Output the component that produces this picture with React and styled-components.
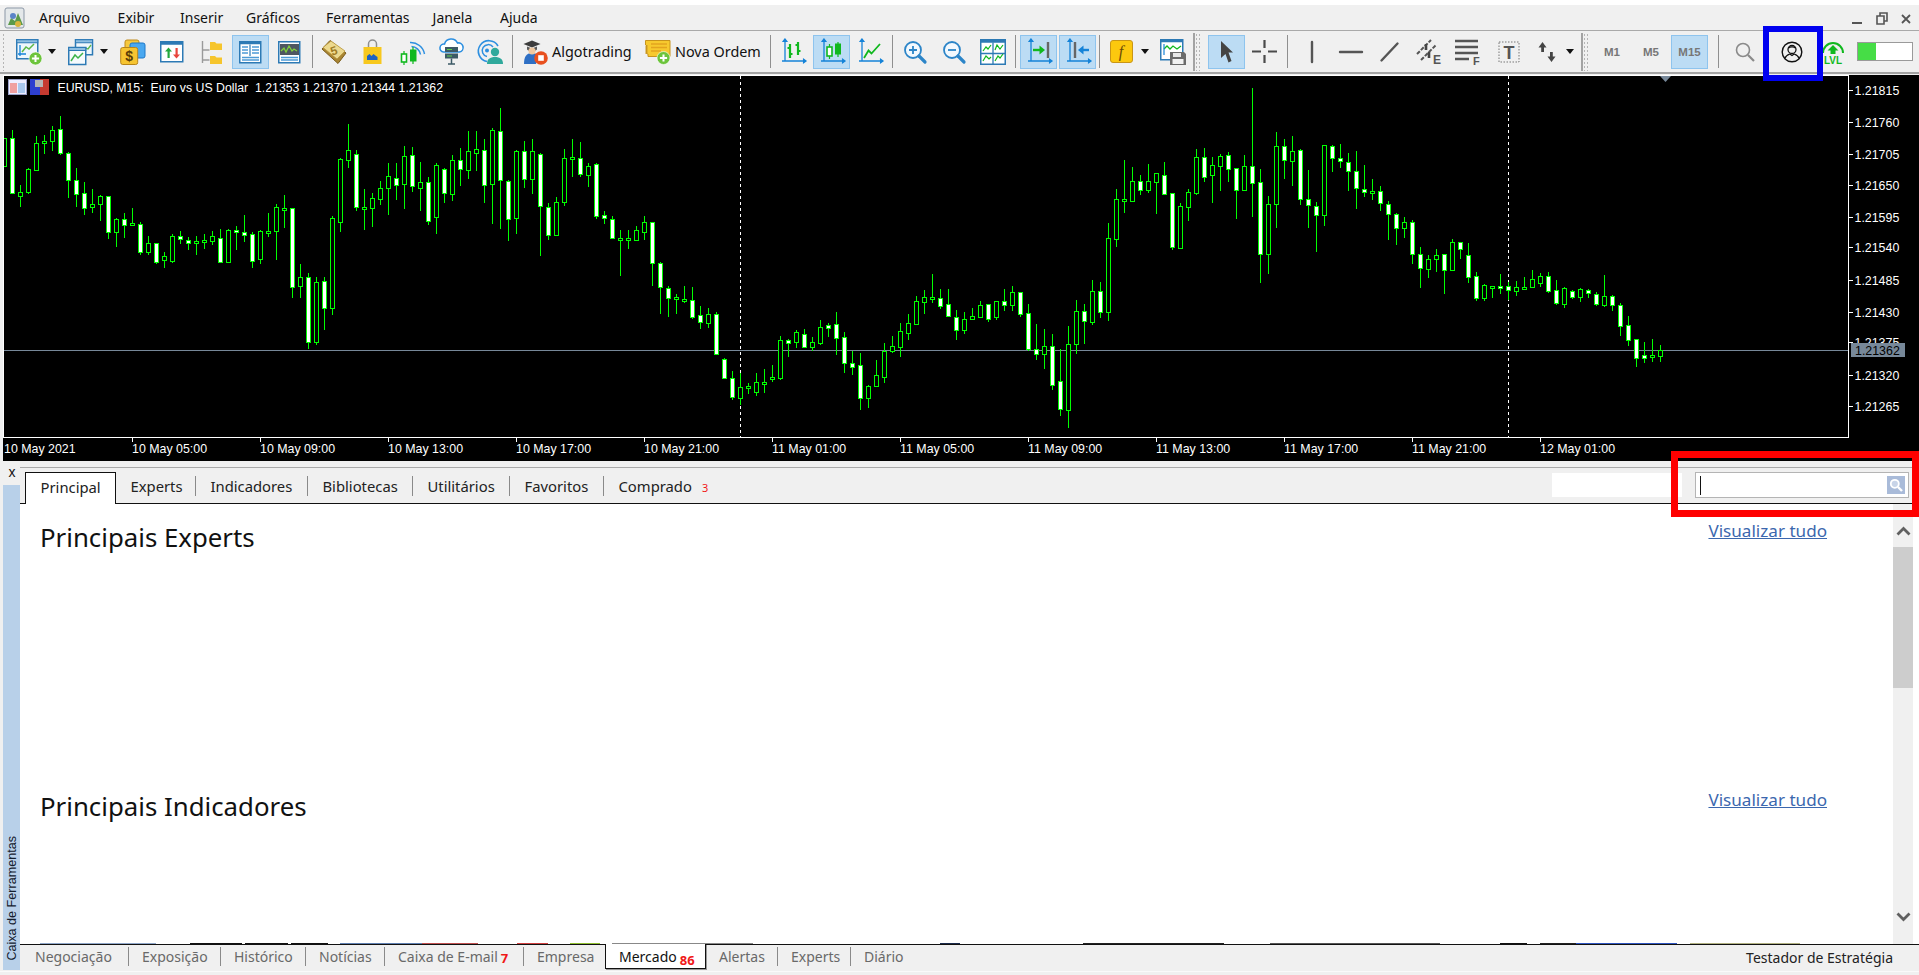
import React from 'react';
import styled, { createGlobalStyle } from 'styled-components';

const UI_FONT = `'Noto Sans', 'Open Sans', Arial, sans-serif`;

const GlobalStyle = createGlobalStyle`
  html, body { margin: 0; padding: 0; background: #f0f0f0; overflow: hidden; }
  #root { width: 1919px; height: 975px; }
  * { box-sizing: border-box; }
`;

const Window = styled.div`
  position: relative;
  width: 1919px;
  height: 975px;
  display: flex;
  flex-direction: column;
  background: #f0f0f0;
  font-family: ${UI_FONT};
  overflow: hidden;
`;

const MenuBar = styled.div`
  height: 31px;
  flex: none;
  display: flex;
  align-items: center;
  border-top: 5px solid #fff;
  border-bottom: 1px solid #a9a9a9;
`;
const AppIcon = styled.svg`
  width: 22px;
  height: 22px;
  margin: 0 13px 0 4px;
  flex: none;
`;
const MenuItem = styled.span`
  width: ${(p) => p.$w}px;
  flex: none;
  font-size: 14px;
  color: #111;
  white-space: nowrap;
`;
const WindowControls = styled.div`
  margin-left: auto;
  display: flex;
  align-items: center;
  padding-right: 7px;
`;

const Toolbar = styled.div`
  height: 43px;
  flex: none;
  display: flex;
  align-items: center;
  border-bottom: 2px solid #a3a3a3;
`;
const Slot = styled.div`
  flex: none;
  width: ${(p) => p.$w}px;
  height: 34px;
  margin-left: ${(p) => p.$ml}px;
  display: flex;
  align-items: center;
  justify-content: center;
  background: ${(p) => (p.$on ? '#bcdcf4' : 'transparent')};
  border: 1px solid ${(p) => (p.$on ? '#8ec4ee' : 'transparent')};
  svg { display: block; flex: none; overflow: visible; }
`;
const ToolLabel = styled(Slot)`
  justify-content: flex-start;
  font-size: 14.4px;
  color: #111;
  white-space: nowrap;
  border: 0;
`;
const TimeFrame = styled(Slot)`
  font-family: 'Liberation Sans', Arial, sans-serif;
  font-size: 11.5px;
  font-weight: 700;
  color: #777;
`;
const ToolSep = styled.div`
  flex: none;
  width: 1px;
  height: 33px;
  margin-left: ${(p) => p.$ml}px;
  background: #8f8f8f;
`;
const Grip = styled.div`
  flex: none;
  width: ${(p) => (p.$bar ? 7 : 4)}px;
  height: 38px;
  margin-left: ${(p) => p.$ml}px;
  border-left: ${(p) => (p.$bar ? '2px solid #a3a3a3' : '0')};
  background-image: radial-gradient(#b5b5b5 40%, transparent 45%);
  background-size: 3px 4px;
  background-repeat: repeat;
`;
const Caret = styled.div`
  flex: none;
  width: 0;
  height: 0;
  margin-left: ${(p) => p.$ml}px;
  border-left: 4.5px solid transparent;
  border-right: 4.5px solid transparent;
  border-top: 5px solid #111;
`;
const Progress = styled.div`
  flex: none;
  width: 56px;
  height: 19px;
  margin-left: ${(p) => p.$ml}px;
  border: 1px solid #9a9a9a;
  background: linear-gradient(90deg, #46dd46 0 34%, #fff 34%);
`;

const ChartFrame = styled.div`
  height: 387px;
  flex: none;
  padding: 1px 0 0 3px;
  svg { display: block; background: #000; }
`;
const Legend = styled.text`
  font-family: 'Liberation Sans', Arial, sans-serif;
  font-size: 12.3px;
  fill: #fff;
  white-space: pre;
`;
const AxisText = styled.text`
  font-family: 'Liberation Sans', Arial, sans-serif;
  font-size: 12.4px;
  fill: ${(p) => p.$fill || '#fff'};
`;

const Toolbox = styled.div`
  flex: 1;
  min-height: 0;
  display: flex;
`;
const Rail = styled.div`
  width: 20px;
  flex: none;
  display: flex;
  flex-direction: column;
  padding: 5px 0 5px 3px;
`;
const RailClose = styled.div`
  height: 19px;
  margin-left: 1px;
  flex: none;
  font: 400 14px/13px 'Liberation Sans', Arial, sans-serif;
  color: #111;
  text-align: center;
`;
const RailStrip = styled.div`
  flex: 1;
  background: #b8d0e9;
  display: flex;
  align-items: flex-end;
  justify-content: center;
  padding-bottom: 9px;
`;
const RailLabel = styled.span`
  writing-mode: vertical-rl;
  transform: rotate(180deg);
  font: 12.6px/16px 'Liberation Sans', Arial, sans-serif;
  color: #14202e;
  white-space: nowrap;
`;
const ToolboxBody = styled.div`
  flex: 1;
  min-width: 0;
  display: flex;
  flex-direction: column;
  padding-top: 6px;
`;
const MarketTabs = styled.div`
  height: 37px;
  flex: none;
  display: flex;
  align-items: flex-end;
  padding-left: 5px;
  border-top: 1px solid #a9a9a9;
  border-bottom: 1px solid #111;
`;
const MarketTab = styled.div`
  flex: none;
  width: ${(p) => p.$w}px;
  height: ${(p) => (p.$active ? 32 : 20)}px;
  margin-bottom: ${(p) => (p.$active ? -1 : 7)}px;
  padding: 0 0 ${(p) => (p.$active ? 3 : 0)}px 14.5px;
  display: flex;
  align-items: center;
  font-size: 14.8px;
  color: #222;
  white-space: nowrap;
  background: ${(p) => (p.$active ? '#fff' : 'transparent')};
  border: ${(p) => (p.$active ? '1px solid #111' : '0')};
  border-bottom: 0;
  border-right: ${(p) => (p.$active ? '1px solid #111' : p.$last ? '0' : '1px solid #8a8a8a')};
`;
const TabBadge = styled.span`
  color: #f01818;
  font-size: ${(p) => p.$size}px;
  margin-left: ${(p) => p.$ml}px;
  align-self: flex-end;
  line-height: 16px;
  font-weight: ${(p) => p.$weight || 400};
`;
const SearchGroup = styled.div`
  margin-left: auto;
  display: flex;
  align-items: center;
  gap: 13px;
  padding-right: 10px;
  align-self: flex-start;
  margin-top: 4px;
`;
const BlankBox = styled.div`
  width: 130px;
  height: 24px;
  background: #fff;
`;
const SearchBox = styled.div`
  width: 214px;
  height: 26px;
  display: flex;
  align-items: center;
  justify-content: space-between;
  padding: 0 3px 0 4px;
  background: #fff;
  border: 1px solid #b4b4b4;
  border-width: 1px 1.5px 1.5px 1px;
`;
const TextCaret = styled.div`
  width: 1px;
  height: 19px;
  background: #111;
`;
const SearchIcon = styled.div`
  width: 18px;
  height: 18px;
  background: #a9bbd9;
  display: flex;
  align-items: center;
  justify-content: center;
`;

const ContentRow = styled.div`
  flex: 1;
  min-height: 0;
  display: flex;
  background: #fff;
  padding-right: 6px;
`;
const ContentMain = styled.div`
  flex: 1;
  min-width: 0;
  display: flex;
  flex-direction: column;
`;
const Section = styled.section`
  flex: ${(p) => (p.$grow ? '1 1 0' : 'none')};
  height: ${(p) => (p.$grow ? 'auto' : '269px')};
  min-height: 0;
  padding: 13px 66px 0 20px;
  display: flex;
  justify-content: space-between;
  align-items: flex-start;
`;
const SectionTitle = styled.h2`
  margin: 0;
  font-size: 25.8px;
  line-height: 40px;
  font-weight: 400;
  color: #111;
`;
const ViewAll = styled.a`
  margin-top: 1px;
  font-size: 17.1px;
  line-height: 25px;
  color: #3b67ae;
  text-decoration: underline;
`;
const PeekStrip = styled.div`
  height: 1px;
  flex: none;
  display: flex;
`;
const PeekBit = styled.div`
  flex: none;
  width: ${(p) => p.$w}px;
  margin-left: ${(p) => p.$ml}px;
  background: ${(p) => p.$c};
`;
const ScrollBar = styled.div`
  width: 20px;
  flex: none;
  background: #f0f0f0;
  display: flex;
  flex-direction: column;
`;
const ScrollButton = styled.div`
  flex: none;
  height: ${(p) => p.$h}px;
  padding-top: ${(p) => p.$pad}px;
  display: flex;
  justify-content: center;
`;
const ScrollThumb = styled.div`
  flex: none;
  height: 141px;
  background: #cdcdcd;
`;

const BottomTabs = styled.div`
  height: 31px;
  flex: none;
  display: flex;
  align-items: flex-start;
  border-top: 1px solid #111;
  position: relative;
  &::after {
    content: '';
    position: absolute;
    left: -20px;
    right: 0;
    bottom: 3px;
    height: 1px;
    background: #fafafa;
  }
`;
const BottomTab = styled.div`
  flex: none;
  width: ${(p) => p.$w}px;
  height: ${(p) => (p.$active ? 25 : 19)}px;
  margin-top: ${(p) => (p.$active ? -1 : 2)}px;
  padding-left: ${(p) => p.$pl || 13}px;
  display: flex;
  align-items: center;
  font-size: 14px;
  white-space: nowrap;
  color: ${(p) => (p.$active ? '#111' : '#696969')};
  background: ${(p) => (p.$active ? '#fff' : 'transparent')};
  border-right: ${(p) => (p.$active ? '0' : p.$last ? '0' : '1px solid #8a8a8a')};
  ${(p) => p.$active && 'border: 1px solid #111; border-top: 0; box-shadow: 1px 1px 0 #999; z-index: 1;'}
`;
const TesterTab = styled.div`
  margin-left: auto;
  padding: 3px 26px 0 0;
  font-size: 14px;
  color: #222;
  white-space: nowrap;
`;

// annotation boxes drawn on top of the screenshot
const Marker = styled.div`
  position: absolute;
  left: ${(p) => p.$x}px;
  top: ${(p) => p.$y}px;
  width: ${(p) => p.$w}px;
  height: ${(p) => p.$h}px;
  border: ${(p) => p.$t}px solid ${(p) => p.$c};
  pointer-events: none;
`;

// [high, bodyTop, bodyBottom, low, filled] read off the chart, y in 1/3 px from y=75
const CANDLES = [
  [190,190,272,272,0],[165,190,355,355,1],[330,352,362,392,0],[280,283,352,355,0],[183,205,284,284,0],[180,199,203,233,0],[153,166,197,225,0],[123,163,233,236,1],
  [232,235,316,365,1],[280,316,358,392,1],[321,355,400,417,1],[342,388,395,412,0],[360,364,388,435,0],[362,364,470,488,1],[430,433,470,513,0],[415,433,449,486,1],
  [399,445,449,449,0],[441,448,530,536,1],[483,505,530,536,0],[503,505,560,563,1],[532,544,556,575,0],[478,484,557,560,0],[468,484,493,503,1],[487,496,505,522,1],
  [482,499,503,537,0],[477,496,500,520,0],[467,484,497,507,0],[462,488,560,560,1],[462,466,560,560,0],[453,466,472,522,1],[420,472,479,497,1],[470,478,557,575,1],
  [465,467,551,565,0],[414,468,470,483,0],[388,397,469,552,0],[360,400,403,456,0],[398,400,635,665,1],[567,607,632,665,0],[595,607,800,818,1],[606,622,800,806,0],
  [606,619,698,762,1],[423,430,698,716,0],[250,253,440,467,0],[147,226,254,276,0],[225,236,397,404,1],[342,396,400,462,0],[354,370,398,453,0],[318,340,373,388,0],
  [264,304,338,417,0],[264,310,329,372,1],[213,244,326,398,0],[216,241,334,347,1],[261,322,338,404,0],[306,322,437,447,1],[264,271,425,473,0],[278,281,355,381,1],
  [240,256,358,374,0],[220,256,281,330,1],[168,229,284,309,0],[168,223,233,285,0],[192,226,329,381,1],[159,166,328,444,0],[99,169,316,459,1],[316,319,431,494,1],
  [225,229,428,473,0],[197,229,311,336,1],[192,229,311,354,0],[234,236,392,540,1],[385,397,479,491,1],[366,380,479,479,0],[222,250,380,390,0],[192,247,250,302,0],
  [202,250,298,302,1],[265,274,299,333,0],[264,268,422,428,1],[408,421,430,444,1],[423,431,488,490,1],[465,490,493,600,0],[465,490,493,518,0],[454,466,494,494,0],

  [423,442,470,492,0],[441,442,563,630,1],[562,563,637,714,1],[633,640,668,723,1],[657,666,670,714,0],[633,672,675,680,0],[636,674,725,729,1],[694,721,740,758,1],
  [699,718,743,757,0],[711,718,838,838,1],[848,851,910,910,1],[888,910,965,972,1],[895,937,968,987,0],[925,933,938,953,0],[894,922,950,960,0],[882,921,924,950,0],
  [870,907,909,917,0],[783,796,908,911,0],[793,796,803,842,1],[765,772,800,816,0],[762,778,815,815,1],[786,802,815,825,0],[735,757,803,806,0],[745,751,758,783,1],
  [711,748,788,837,1],[771,787,865,890,1],[827,865,875,896,1],[834,871,968,1001,1],[929,934,968,995,0],[855,901,932,932,0],[804,828,905,920,0],[783,814,827,830,0],
  [744,769,815,842,0],[717,745,773,792,0],[663,679,746,746,0],[645,667,680,713,0],[597,666,671,681,0],[642,670,692,698,1],[642,688,722,722,1],[705,727,764,791,1],
  [711,733,764,773,0],[698,724,731,731,0],[679,691,725,725,0],[686,688,731,737,1],[679,679,727,731,0],[642,679,689,705,1],[633,652,689,704,0],[651,652,716,722,1],
  [687,715,821,825,1],[747,823,836,851,1],[762,814,836,879,0],[777,814,929,941,1],[822,919,1001,1019,1],[753,808,1004,1055,0],[675,709,808,833,0],[687,709,737,804,1],
  [615,649,740,746,0],[621,649,710,726,1],[444,490,710,735,0],[342,373,491,513,0],[255,372,376,411,0],[276,319,377,377,0],[300,319,344,357,1],[267,319,344,351,0],
  [295,295,320,414,0],[261,301,356,356,1],[355,355,515,521,1],[385,394,518,518,0],[342,352,395,435,0],[222,247,353,356,0],[219,247,305,318,1],[247,271,299,381,0],
  [237,244,272,345,0],[232,241,281,318,1],[280,280,344,429,1],[240,274,344,344,0],[39,274,323,422,1],[282,322,536,621,1],[363,388,536,594,0],[172,214,388,456,0],

  [192,214,256,309,1],[183,229,257,330,0],[223,226,373,387,1],[285,373,391,456,1],[381,392,421,528,1],[211,211,421,450,0],[210,214,250,288,1],[207,250,259,276,1],
  [234,260,289,345,1],[228,289,340,399,1],[270,343,352,362,1],[312,349,352,372,0],[333,349,385,404,1],[379,388,418,492,1],[414,418,460,507,1],[427,442,460,486,0],
  [436,442,538,563,1],[516,538,580,636,1],[540,553,581,605,0],[522,541,553,587,0],[538,538,586,654,1],[492,502,586,586,0],[502,502,523,548,1],[504,541,607,621,1],
  [591,604,670,675,1],[628,631,668,675,0],[634,634,637,666,0],[597,634,639,654,1],[620,634,646,672,1],[618,637,647,660,0],[606,636,639,639,0],[585,613,635,635,0],
  [594,604,623,632,0],[591,604,647,650,1],[615,646,685,687,1],[637,640,686,695,0],[645,647,665,669,1],[640,643,665,678,0],[642,644,655,665,1],[650,656,688,690,1],
  [600,664,690,692,0],[660,663,689,705,1],[684,691,752,780,1],[723,751,794,810,1],[792,793,848,873,1],[801,841,848,860,1],[792,841,845,858,0],[810,826,842,858,0],
];

const PRICE_TICKS = [
  ['1.21815', 44], ['1.21760', 140], ['1.21705', 236], ['1.21650', 329], ['1.21595', 425], ['1.21540', 517],
  ['1.21485', 614], ['1.21430', 710], ['1.21375', 800], ['1.21320', 899], ['1.21265', 992],
];
const TIME_TICKS = ['10 May 2021', '10 May 05:00', '10 May 09:00', '10 May 13:00', '10 May 17:00', '10 May 21:00', '11 May 01:00', '11 May 05:00', '11 May 09:00', '11 May 13:00', '11 May 17:00', '11 May 21:00', '12 May 01:00'];

const toY = (z) => Math.round(75 + z / 3);

const Candle = ({ data, index }) => {
  const [high, top, bottom, low, filled] = data;
  const x = 4 + 8 * index;
  const y1 = toY(top);
  const y2 = Math.max(toY(bottom), y1 + 2);
  return (
    <g>
      <rect x={x} y={toY(high)} width={1} height={toY(low) - toY(high) + 1} fill="#00ff00" />
      <rect x={x - 2} y={y1} width={5} height={y2 - y1 + 1} fill="#00ff00" />
      {y2 - y1 > 1 && <rect x={x - 1} y={y1 + 1} width={3} height={y2 - y1 - 1} fill={filled ? '#fff' : '#000'} />}
    </g>
  );
};

const Chart = () => (
  <svg width="1916" height="386" viewBox="3 75 1916 386" shapeRendering="crispEdges">
    {/* plot frame */}
    <rect x="3" y="75" width="1846" height="1" fill="#fff" />
    <rect x="3" y="75" width="1" height="363" fill="#fff" />
    <rect x="3" y="437" width="1846" height="1" fill="#fff" />
    <rect x="1848" y="75" width="1" height="363" fill="#fff" />
    {/* period separators and last price line */}
    <line x1="740.5" y1="76" x2="740.5" y2="437" stroke="#fff" strokeDasharray="3 3" />
    <line x1="1508.5" y1="76" x2="1508.5" y2="437" stroke="#fff" strokeDasharray="3 3" />
    <rect x="4" y="350" width="1844" height="1" fill="#778899" />
    <g clipPath="url(#plot)">
      {CANDLES.map((c, i) => <Candle key={i} data={c} index={i} />)}
    </g>
    <defs>
      <clipPath id="plot"><rect x="4" y="76" width="1844" height="361" /></clipPath>
    </defs>
    <polygon points="1660,76 1671,76 1665.5,82" fill="#778899" shapeRendering="auto" />

    {/* legend */}
    <g shapeRendering="auto">
      <rect x="8.5" y="79.5" width="18" height="15" fill="#eef" stroke="#9aa0c8" />
      <rect x="10" y="83" width="7" height="10" fill="#f0a0a0" />
      <rect x="18" y="83" width="7" height="10" fill="#a9c8ee" />
      <rect x="30" y="79" width="10" height="16" fill="#2d3fd0" />
      <rect x="40" y="79" width="9" height="16" fill="#c53a30" />
      <rect x="35" y="80" width="8" height="7" fill="#b5b5b5" />
      <Legend x="57.5" y="92">{'EURUSD, M15:  Euro vs US Dollar  1.21353 1.21370 1.21344 1.21362'}</Legend>
    </g>

    {/* axes */}
    {PRICE_TICKS.map(([label, z]) => (
      <g key={label}>
        <rect x="1849" y={toY(z)} width="4" height="1" fill="#fff" />
        <AxisText x="1854.5" y={toY(z) + 5} shapeRendering="auto">{label}</AxisText>
      </g>
    ))}
    <rect x="1851" y="343" width="54" height="14" fill="#778899" />
    <AxisText x="1855" y="355" $fill="#000" shapeRendering="auto">1.21362</AxisText>
    {TIME_TICKS.map((label, i) => (
      <g key={label}>
        {i > 0 && <rect x={4 + 128 * i} y="438" width="1" height="4" fill="#fff" />}
        <AxisText x={4 + 128 * i} y="453" shapeRendering="auto">{label}</AxisText>
      </g>
    ))}
  </svg>
);

const BLUE = '#2d7ab5';
const AXIS = '#1583d8';
const GREEN = '#10b81e';

const Ico = ({ w = 26, h = 26, children }) => (
  <svg width={w} height={h} viewBox={`0 0 ${w} ${h}`}>{children}</svg>
);

const MiniWindow = ({ x = 0.75, y = 0.75, w, h, fill = '#fff' }) => (
  <g>
    <rect x={x} y={y} width={w} height={h} fill={fill} stroke={BLUE} strokeWidth="1.5" />
    <rect x={x} y={y} width={w} height="3" fill="#8fbfe2" stroke={BLUE} strokeWidth="1" />
  </g>
);

const PlusBadge = ({ cx, cy, r = 6.5 }) => (
  <g>
    <circle cx={cx} cy={cy} r={r} fill="#6cc43c" stroke="#fff" strokeWidth="0.6" />
    <path d={`M${cx - 3.6} ${cy}h7.2M${cx} ${cy - 3.6}v7.2`} stroke="#fff" strokeWidth="2" />
  </g>
);

const ChartAxes = ({ x = 2, y = 1, w = 23, h = 24 }) => (
  <path
    d={`M${x + 3} ${y}V${y + h - 3}M${x} ${y + h - 3}H${x + w}M${x + 3} ${y - 1}l-1.8 2.4h3.6zM${x + w + 1} ${y + h - 3}l-2.4 -1.8v3.6z`}
    stroke={AXIS}
    strokeWidth="1.3"
    fill={AXIS}
  />
);

const NewChartIcon = () => (
  <Ico w={26} h={26}>
    <MiniWindow w={21} h={19} fill="#eef6fc" />
    <path d="M4 6v11M2 15h8" stroke={AXIS} strokeWidth="1.3" fill="none" />
    <path d="M6 13l4-5 3 2 5-5" stroke="#5db846" strokeWidth="1.5" fill="none" />
    <PlusBadge cx={19.5} cy={19.5} />
  </Ico>
);
const ProfilesIcon = () => (
  <Ico w={26} h={26}>
    <MiniWindow x={7.5} y={0.75} w={17} h={15} fill="#eef6fc" />
    <path d="M14 13l3-4 3 1 3-4" stroke="#5db846" strokeWidth="1.3" fill="none" />
    <MiniWindow x={0.75} y={8.5} w={17} h={17} fill="#f6fafd" />
    <path d="M3 22l4-6 3 3 5-5" stroke="#3cb34a" strokeWidth="1.5" fill="none" />
  </Ico>
);
const MarketIcon = () => (
  <Ico w={26} h={26}>
    <rect x="5" y="1" width="14" height="12" rx="2" fill="#f6c83c" stroke="#c08a1a" />
    <rect x="10" y="4" width="15" height="15" rx="2" fill="#4aa8f0" stroke="#1f78c8" />
    <rect x="0.7" y="8.5" width="17" height="17" rx="2" fill="#f6c430" stroke="#b8851a" />
    <text x="9.2" y="22" fontSize="14" fontWeight="700" fontFamily="'Liberation Sans', sans-serif" textAnchor="middle" fill="#5a3c08">$</text>
  </Ico>
);
const WatchIcon = () => (
  <Ico w={24} h={24}>
    <rect x="0.75" y="1.75" width="22" height="20" fill="#fff" stroke={BLUE} strokeWidth="1.5" />
    <rect x="0.75" y="1.75" width="22" height="3" fill={BLUE} />
    <path d="M7.5 18v-6.5H5l3.5-4 3.5 4H9.7V18z" fill="#24a83c" />
    <path d="M15.5 8v6.5H13l3.5 4 3.500-4h-2.300V8z" fill="#e8453c" />
  </Ico>
);
const TreeIcon = () => (
  <Ico w={22} h={26}>
    <path d="M1.5 2v22M1.5 11h7M1.5 21h7" stroke="#9a9a9a" strokeWidth="1.4" fill="none" />
    <path d="M9 7V3h5l1.5 1.5h5.5V11H9z" fill="#f6c52c" />
    <path d="M9 23v-6h5l1.5 1.5h5.5V25H9z" fill="#f6c52c" />
  </Ico>
);
const PanelIcon = () => (
  <Ico w={23} h={26}>
    <rect x="0.75" y="2.75" width="21" height="21" fill="#fff" stroke={BLUE} strokeWidth="1.5" />
    <rect x="0.75" y="2.75" width="21" height="2.5" fill={BLUE} />
    <path d="M11 5.5V17" stroke={BLUE} strokeWidth="1.2" />
    <path d="M3 8h6M3 11h6M3 14h6M13 8h7M13 11h7M13 14h7M3 18.5h17M3 21h17" stroke="#4d9bd6" strokeWidth="1.3" />
  </Ico>
);
const TerminalIcon = () => (
  <Ico w={23} h={26}>
    <rect x="0.75" y="2.75" width="21" height="21" fill="#fff" stroke={BLUE} strokeWidth="1.5" />
    <rect x="2" y="5" width="19" height="11" fill="#4e5660" />
    <path d="M3 12l3-3 2 4 3-6 3 5 2-2 3 2" stroke="#7fd03c" strokeWidth="1.3" fill="none" />
    <path d="M3 18.5h17M3 21h17" stroke="#4d9bd6" strokeWidth="1.3" />
  </Ico>
);
const BookIcon = () => (
  <Ico w={26} h={26}>
    <path d="M1 10L9 1.5 25 14l-8 10.500z" fill="#a98532" stroke="#7a5c1a" />
    <path d="M2 8.500L10 2l14 10-8 8z" fill="#ecd98e" stroke="#b8963c" strokeWidth="0.8" />
    <text x="13" y="16" fontSize="12" fontWeight="700" fontFamily="'Liberation Sans', sans-serif" textAnchor="middle" fill="#a07c24" transform="rotate(-18 13 12)">5</text>
  </Ico>
);
const BagIcon = () => (
  <Ico w={19} h={26}>
    <path d="M5.5 9V5a4 4 0 0 1 8 0v4" stroke="#8e8e8e" strokeWidth="1.5" fill="none" />
    <rect x="0.5" y="8" width="18" height="17" fill="#f7c81e" />
    <path d="M4 21v-4l2.5-2 2 2 2-2 2.5 2 1.5 1v3z" fill="#1d62c0" />
  </Ico>
);
const SignalIcon = () => (
  <Ico w={25} h={26}>
    <path d="M10 3.500A14 14 0 0 1 24.500 15" stroke="#2c8fe0" strokeWidth="1.500" fill="none" />
    <path d="M11.500 7.500A9.500 9.500 0 0 1 20.500 15.500" stroke="#2c8fe0" strokeWidth="1.500" fill="none" />
    <path d="M4 12v14M13 8v17" stroke={GREEN} strokeWidth="1.200" />
    <rect x="1.500" y="15" width="5" height="8" fill="#fff" stroke={GREEN} strokeWidth="1.600" />
    <rect x="10.500" y="11" width="5.500" height="11" fill={GREEN} stroke={GREEN} />
  </Ico>
);
const CloudIcon = () => (
  <Ico w={25} h={26}>
    <path d="M4.5 13a4 4 0 0 1 1-8 7 7 0 0 1 13-1 4.5 4.5 0 0 1 2 9z" fill="#fff" stroke="#2c8fe0" strokeWidth="1.6" />
    <rect x="6" y="8" width="13" height="5" fill="#3c5a66" />
    <rect x="6" y="14.5" width="13" height="5" fill="#3c5a66" />
    <path d="M8 10.5h5M8 17h5" stroke="#5fd24a" strokeWidth="1.2" />
    <path d="M12.5 19.5V25M9 25h7" stroke="#3c5a66" strokeWidth="1.5" />
  </Ico>
);
const CommunityIcon = () => (
  <Ico w={26} h={26}>
    <path d="M10 22.5A10.500 10.500 0 1 1 21 7" stroke="#2c8fe0" strokeWidth="1.6" fill="none" />
    <path d="M10 17.5A6 6 0 1 1 16 8" stroke="#2c8fe0" strokeWidth="1.5" fill="none" />
    <circle cx="10" cy="11.5" r="2" fill="#2c8fe0" />
    <circle cx="18" cy="13" r="4.2" fill="#2fa99c" />
    <path d="M10 25c0-5 3-7 8-7s8 2 8 7z" fill="#2fa99c" />
  </Ico>
);
const AlgoIcon = () => (
  <Ico w={25} h={26}>
    <path d="M0.5 5L9 1.5 17.5 5 9 8.5z" fill="#3c3c3c" />
    <path d="M4 7.5v3c2 2 8 2 10 0v-3L9 9.5z" fill="#5a5a5a" />
    <path d="M1 25c0-7 2-11 8-11 3 0 5 1 6 3l-2 8z" fill="#2e6fc4" />
    <circle cx="9" cy="12" r="3.5" fill="#f0c8a0" />
    <circle cx="18" cy="19" r="6.8" fill="#e8501e" />
    <rect x="15.2" y="16.2" width="5.6" height="5.6" fill="#fff" />
  </Ico>
);
const OrderIcon = () => (
  <Ico w={26} h={26}>
    <path d="M0.5 1.5H25v16H3V15l-2.500-1 2-1-2-1 2-1-2-1 2-1-2-1 2-1-2-1z" fill="#f7c92e" stroke="#c8941c" />
    <path d="M6 5h16M6 8.5h16M6 12h10" stroke="#e3a41f" strokeWidth="1.3" />
    <PlusBadge cx={18.5} cy={19} r={6.5} />
  </Ico>
);
const BarsIcon = () => (
  <Ico>
    <ChartAxes />
    <path d="M10 5v14M7.5 9H10M10 15h2.500M18 3v13M15.500 6H18M18 12h2.500" stroke={GREEN} strokeWidth="2.2" fill="none" />
  </Ico>
);
const CandlesIcon = () => (
  <Ico>
    <ChartAxes />
    <path d="M10.5 5v15M19 3v15" stroke={GREEN} strokeWidth="1.2" />
    <rect x="8" y="8" width="5" height="9" fill="#fff" stroke={GREEN} strokeWidth="1.6" />
    <rect x="16.5" y="5" width="5" height="10" fill={GREEN} stroke={GREEN} />
  </Ico>
);
const LineIcon = () => (
  <Ico>
    <ChartAxes />
    <path d="M7 19l4.500-7.500 3 3L23 5" stroke={GREEN} strokeWidth="1.8" fill="none" />
  </Ico>
);
const ZoomIcon = ({ plus }) => (
  <Ico w={24} h={26}>
    <circle cx="10" cy="11" r="8" fill="#f3f9fe" stroke="#2c85c8" strokeWidth="1.8" />
    <path d="M16 17l6 6" stroke="#2c85c8" strokeWidth="3.2" strokeLinecap="round" />
    <path d={plus ? 'M6 11h8M10 7v8' : 'M6 11h8'} stroke="#2c85c8" strokeWidth="1.8" />
  </Ico>
);
const TileIcon = () => (
  <Ico>
    <rect x="0.75" y="0.75" width="24.5" height="24.5" fill="#fff" stroke={BLUE} strokeWidth="1.5" />
    <rect x="0.75" y="0.75" width="24.5" height="3" fill={BLUE} />
    <path d="M13 3.5V25M1 14.5h24" stroke={BLUE} strokeWidth="1.3" />
    <path d="M3 12l3-4 2 2 3-4M15 11l2-5 3 4 3-4M3 22l3-5 3 3 2-2M15 22l3-5 2 2 3-4" stroke={GREEN} strokeWidth="1.2" fill="none" />
  </Ico>
);
const ShiftIcon = ({ left }) => (
  <Ico>
    <ChartAxes />
    {left ? (
      <g>
        <path d="M10 3v16" stroke="#666" strokeWidth="2.4" />
        <path d="M24 11h-7" stroke={AXIS} strokeWidth="2.4" />
        <path d="M13 11l5.500-4.500v9z" fill={AXIS} />
      </g>
    ) : (
      <g>
        <path d="M22 3v16" stroke="#666" strokeWidth="2.4" />
        <path d="M7 11h7" stroke={GREEN} strokeWidth="2.4" />
        <path d="M19 11l-5.500-4.500v9z" fill={GREEN} />
      </g>
    )}
  </Ico>
);
const FunctionIcon = () => (
  <Ico w={23} h={23}>
    <rect x="0.5" y="0.5" width="22" height="22" rx="2.5" fill="#fcc80e" stroke="#c99516" />
    <text x="11" y="17" fontSize="16" fontStyle="italic" fontFamily="'Liberation Serif', serif" textAnchor="middle" fill="#6b4a08">f</text>
  </Ico>
);
const TemplateIcon = () => (
  <Ico>
    <rect x="0.75" y="0.75" width="22" height="20" fill="#fff" stroke={BLUE} strokeWidth="1.5" />
    <rect x="0.75" y="0.75" width="22" height="2.5" fill={BLUE} />
    <path d="M4 10l3-3 3 3 3-3 4 3 4-3" stroke={GREEN} strokeWidth="1.3" fill="none" />
    <path d="M4 5v11" stroke={AXIS} strokeWidth="1.2" />
    <path d="M10 13h14l2 2v11H10z" fill="#6b6b6b" />
    <rect x="13" y="14" width="8" height="4" fill="#e8e8e8" />
    <rect x="12.5" y="20" width="11" height="5" fill="#f2f2f2" />
  </Ico>
);
const CursorIcon = () => (
  <Ico w={14} h={24}>
    <path d="M1 1l12 11.500H8.500l3 8.500-3 1.500-3-8.500L1 18z" fill="#444" />
  </Ico>
);
const CrossIcon = () => (
  <Ico w={25} h={25}>
    <path d="M12.5 1v8M12.5 16v8M0 12.5h9M16 12.5h9" stroke="#4a4a4a" strokeWidth="2.2" />
  </Ico>
);
const VLineIcon = () => <Ico w={4} h={24}><path d="M2 2v20" stroke="#555" strokeWidth="2.4" strokeLinecap="round" /></Ico>;
const HLineIcon = () => <Ico w={24} h={4}><path d="M1 2h22" stroke="#555" strokeWidth="2.4" strokeLinecap="round" /></Ico>;
const TrendIcon = () => <Ico w={19} h={20}><path d="M1.5 18.5l16-17" stroke="#555" strokeWidth="2.4" strokeLinecap="round" /></Ico>;
const FiboIcon = () => (
  <Ico w={26} h={26}>
    <path d="M1 15L15 1M5 21L20 6" stroke="#555" strokeWidth="2" strokeDasharray="4 1.5" />
    <path d="M10 5v6M13 13v6" stroke="#444" strokeWidth="2.6" />
    <text x="17" y="25" fontSize="12" fontWeight="700" fontFamily="'Liberation Sans', sans-serif" fill="#555">E</text>
  </Ico>
);
const ChannelIcon = () => (
  <Ico w={26} h={26}>
    <path d="M0 2h23M0 8h23M0 14h23M0 20h14" stroke="#555" strokeWidth="2.4" />
    <text x="18" y="26" fontSize="11" fontWeight="700" fontFamily="'Liberation Sans', sans-serif" fill="#555">F</text>
  </Ico>
);
const TextToolIcon = () => (
  <Ico w={22} h={24}>
    <rect x="1" y="2" width="20" height="20" fill="none" stroke="#777" strokeDasharray="1.5 1.5" />
    <text x="11" y="19" fontSize="18" fontWeight="700" fontFamily="'Liberation Sans', sans-serif" textAnchor="middle" fill="#555">T</text>
  </Ico>
);
const ArrowsIcon = () => (
  <Ico w={18} h={22}>
    <path d="M4.5 1l4 5.500H6V11H3.200V6.500H.5z" fill="#444" />
    <path d="M13.5 21l-4-5.500H12V11h2.800v4.500h2.700z" fill="#444" />
  </Ico>
);
const LensIcon = () => (
  <Ico w={20} h={20}>
    <circle cx="8" cy="8" r="6.5" fill="none" stroke="#8a8a8a" strokeWidth="1.6" />
    <path d="M13 13l6 6" stroke="#8a8a8a" strokeWidth="2.2" />
  </Ico>
);
const AccountIcon = () => (
  <Ico w={22} h={22}>
    <circle cx="11" cy="11" r="9.8" fill="none" stroke="#111" strokeWidth="1.4" />
    <circle cx="11" cy="8.5" r="4" fill="none" stroke="#111" strokeWidth="1.3" />
    <path d="M7.5 7c1.500-1.500 5.500-1.500 7 0" stroke="#111" strokeWidth="1.3" fill="none" />
    <path d="M3.800 17.500c1-3 3.500-4 5-4.500l2.200 1.500 2.200-1.500c1.500.5 4 1.500 5 4.500" stroke="#111" strokeWidth="1.3" fill="none" />
  </Ico>
);
const LevelIcon = () => (
  <Ico w={24} h={26}>
    <path d="M2 14a10 10 0 0 1 20 0" stroke={GREEN} strokeWidth="2" fill="none" />
    <path d="M12 6l5.500 5.500H14.500V15h-5V11.500H6.500z" fill={GREEN} />
    <text x="12" y="25" fontSize="10" fontWeight="700" fontFamily="'Liberation Sans', sans-serif" textAnchor="middle" fill={GREEN}>LVL</text>
  </Ico>
);

// toolbar as drawn, left to right: each entry's ml is the gap to the entry before it
const TOOLS = [
  { kind: 'grip', ml: 2 },
  { ml: 10, w: 26, icon: <NewChartIcon /> },
  { kind: 'caret', ml: 6 },
  { ml: 12, w: 26, icon: <ProfilesIcon /> },
  { kind: 'caret', ml: 6 },
  { ml: 12, w: 26, icon: <MarketIcon /> },
  { ml: 14, w: 24, icon: <WatchIcon /> },
  { ml: 17, w: 21, icon: <TreeIcon /> },
  { ml: 10, w: 37, on: true, icon: <PanelIcon /> },
  { ml: 9, w: 23, icon: <TerminalIcon /> },
  { kind: 'sep', ml: 11 },
  { ml: 8, w: 26, icon: <BookIcon /> },
  { ml: 16, w: 19, icon: <BagIcon /> },
  { ml: 18, w: 25, icon: <SignalIcon /> },
  { ml: 14, w: 25, icon: <CloudIcon /> },
  { ml: 13, w: 26, icon: <CommunityIcon /> },
  { kind: 'sep', ml: 9 },
  { ml: 10, w: 25, icon: <AlgoIcon /> },
  { kind: 'label', ml: 4, w: 78, text: 'Algotrading' },
  { ml: 15, w: 26, icon: <OrderIcon /> },
  { kind: 'label', ml: 4, w: 85, text: 'Nova Ordem' },
  { kind: 'sep', ml: 10 },
  { ml: 9, w: 26, icon: <BarsIcon /> },
  { ml: 7, w: 37, on: true, icon: <CandlesIcon /> },
  { ml: 7, w: 26, icon: <LineIcon /> },
  { kind: 'sep', ml: 9 },
  { ml: 10, w: 24, icon: <ZoomIcon plus /> },
  { ml: 15, w: 24, icon: <ZoomIcon /> },
  { ml: 14, w: 26, icon: <TileIcon /> },
  { kind: 'sep', ml: 9 },
  { ml: 4, w: 37, on: true, icon: <ShiftIcon /> },
  { ml: 2, w: 37, on: true, icon: <ShiftIcon left /> },
  { kind: 'sep', ml: 3 },
  { ml: 10, w: 23, icon: <FunctionIcon /> },
  { kind: 'caret', ml: 8 },
  { ml: 11, w: 26, icon: <TemplateIcon /> },
  { kind: 'bar', ml: 7 },
  { ml: 8, w: 37, on: true, icon: <CursorIcon /> },
  { ml: 7, w: 25, icon: <CrossIcon /> },
  { kind: 'sep', ml: 10 },
  { ml: 22, w: 4, icon: <VLineIcon /> },
  { ml: 25, w: 24, icon: <HLineIcon /> },
  { ml: 17, w: 19, icon: <TrendIcon /> },
  { ml: 17, w: 26, icon: <FiboIcon /> },
  { ml: 13, w: 26, icon: <ChannelIcon /> },
  { ml: 17, w: 22, icon: <TextToolIcon /> },
  { ml: 18, w: 18, icon: <ArrowsIcon /> },
  { kind: 'caret', ml: 10 },
  { kind: 'bar', ml: 7 },
  { kind: 'tf', ml: 12, w: 24, text: 'M1' },
  { kind: 'tf', ml: 15, w: 24, text: 'M5' },
  { kind: 'tf', ml: 8, w: 37, on: true, text: 'M15' },
  { kind: 'sep', ml: 10 },
  { ml: 16, w: 20, icon: <LensIcon /> },
  { ml: 26, w: 22, icon: <AccountIcon /> },
  { ml: 18, w: 24, icon: <LevelIcon /> },
  { kind: 'progress', ml: 12 },
];

const renderTool = (t, i) => {
  if (t.kind === 'grip') return <Grip key={i} $ml={t.ml} />;
  if (t.kind === 'bar') return <Grip key={i} $ml={t.ml} $bar />;
  if (t.kind === 'sep') return <ToolSep key={i} $ml={t.ml} />;
  if (t.kind === 'caret') return <Caret key={i} $ml={t.ml} />;
  if (t.kind === 'progress') return <Progress key={i} $ml={t.ml} />;
  if (t.kind === 'label') return <ToolLabel key={i} $ml={t.ml} $w={t.w}>{t.text}</ToolLabel>;
  if (t.kind === 'tf') return <TimeFrame key={i} $ml={t.ml} $w={t.w} $on={t.on}>{t.text}</TimeFrame>;
  return <Slot key={i} $ml={t.ml} $w={t.w} $on={t.on}>{t.icon}</Slot>;
};

const MENU = [['Arquivo', 78.6], ['Exibir', 62.4], ['Inserir', 66], ['Gráficos', 80], ['Ferramentas', 106.6], ['Janela', 67.4], ['Ajuda', 50]];

const MARKET_TABS = [
  { label: 'Principal', w: 91, active: true },
  { label: 'Experts', w: 80 },
  { label: 'Indicadores', w: 112 },
  { label: 'Bibliotecas', w: 105 },
  { label: 'Utilitários', w: 97 },
  { label: 'Favoritos', w: 94 },
  { label: 'Comprado', w: 110, last: true, badge: '3' },
];
const BOTTOM_TABS = [
  { label: 'Negociação', w: 109, pl: 15 },
  { label: 'Exposição', w: 92 },
  { label: 'Histórico', w: 85 },
  { label: 'Notícias', w: 79 },
  { label: 'Caixa de E-mail', w: 139, badge: '7' },
  { label: 'Empresa', w: 81, last: true },
  { label: 'Mercado', w: 101, active: true, badge: '86' },
  { label: 'Alertas', w: 72 },
  { label: 'Experts', w: 73 },
  { label: 'Diário', w: 70, last: true },
];
// cards of the next row that just show above the bottom tabs: [gap, width, colour]
const PEEK = [
  [20, 116, '#8fa6c8'], [34, 52, '#111'], [3, 43, '#111'], [3, 37, '#111'], [12, 82, '#5f7fb0'], [0, 56, '#c05050'],
  [39, 31, '#d04040'], [22, 30, '#90c030'], [12, 141, '#888'], [187, 20, '#1a2a4a'], [123, 141, '#222'], [46, 170, '#555'],
  [60, 27, '#111'], [13, 36, '#222'], [0, 101, '#2f55c0'], [13, 110, '#b0b080'],
];

const Chevron = ({ down }) => (
  <svg width="15" height="10" viewBox="0 0 15 10">
    <path d={down ? 'M1.5 1.5l6 6 6-6' : 'M1.5 8.5l6-6 6 6'} stroke="#606060" strokeWidth="2.8" fill="none" />
  </svg>
);

const App = () => (
  <Window>
    <GlobalStyle />
    <MenuBar>
      <AppIcon viewBox="0 0 22 22">
        <rect x="1" y="1" width="19" height="20" rx="2" fill="#e4e8ea" stroke="#8b97a6" />
        <path d="M4 18l3-7 4 3 3-8 5 12z" fill="#5b9a4a" />
        <circle cx="9" cy="9" r="3" fill="#5a84c8" />
        <circle cx="14" cy="17" r="3" fill="#d9b43c" />
      </AppIcon>
      {MENU.map(([label, w]) => <MenuItem key={label} $w={w}>{label}</MenuItem>)}
      <WindowControls>
        <svg width="62" height="14" viewBox="0 0 62 14">
          <path d="M2 12h10" stroke="#555" strokeWidth="2" />
          <path d="M27 5h7v8h-7zM30 5V2h7v8h-3" stroke="#555" strokeWidth="1.600" fill="none" />
          <path d="M52 4l8 8M60 4l-8 8" stroke="#555" strokeWidth="1.800" />
        </svg>
      </WindowControls>
    </MenuBar>

    <Toolbar>{TOOLS.map(renderTool)}</Toolbar>

    <ChartFrame><Chart /></ChartFrame>

    <Toolbox>
      <Rail>
        <RailClose>x</RailClose>
        <RailStrip><RailLabel>Caixa de Ferramentas</RailLabel></RailStrip>
      </Rail>
      <ToolboxBody>
        <MarketTabs>
          {MARKET_TABS.map((t) => (
            <MarketTab key={t.label} $w={t.w} $active={t.active} $last={t.last}>
              {t.label}
              {t.badge && <TabBadge $size={11} $ml={10}>{t.badge}</TabBadge>}
            </MarketTab>
          ))}
          <SearchGroup>
            <BlankBox />
            <SearchBox>
              <TextCaret />
              <SearchIcon>
                <svg width="14" height="14" viewBox="0 0 14 14">
                  <circle cx="5.8" cy="5.8" r="4" fill="#c8d4e8" stroke="#fff" strokeWidth="1.8" />
                  <path d="M9 9l4 4" stroke="#fff" strokeWidth="2.4" />
                </svg>
              </SearchIcon>
            </SearchBox>
          </SearchGroup>
        </MarketTabs>

        <ContentRow>
          <ContentMain>
            <Section>
              <SectionTitle>Principais Experts</SectionTitle>
              <ViewAll>Visualizar tudo</ViewAll>
            </Section>
            <Section $grow>
              <SectionTitle>Principais Indicadores</SectionTitle>
              <ViewAll>Visualizar tudo</ViewAll>
            </Section>
            <PeekStrip>
              {PEEK.map(([ml, w, c], i) => <PeekBit key={i} $ml={ml} $w={w} $c={c} />)}
            </PeekStrip>
          </ContentMain>
          <ScrollBar>
            <ScrollButton $h={43} $pad={22}><Chevron /></ScrollButton>
            <ScrollThumb />
            <ScrollButton $h={256} $pad={224}><Chevron down /></ScrollButton>
          </ScrollBar>
        </ContentRow>

        <BottomTabs>
          {BOTTOM_TABS.map((t) => (
            <BottomTab key={t.label + t.w} $w={t.w} $pl={t.pl} $active={t.active} $last={t.last}>
              {t.label}
              {t.badge && <TabBadge $size={13} $ml={3} $weight={700}>{t.badge}</TabBadge>}
            </BottomTab>
          ))}
          <TesterTab>Testador de Estratégia</TesterTab>
        </BottomTabs>
      </ToolboxBody>
    </Toolbox>

    <Marker $x={1763} $y={26} $w={60} $h={55} $t={6} $c="#0000f0" />
    <Marker $x={1671} $y={451} $w={248} $h={66} $t={7} $c="#ff0000" />
  </Window>
);

export default App;
